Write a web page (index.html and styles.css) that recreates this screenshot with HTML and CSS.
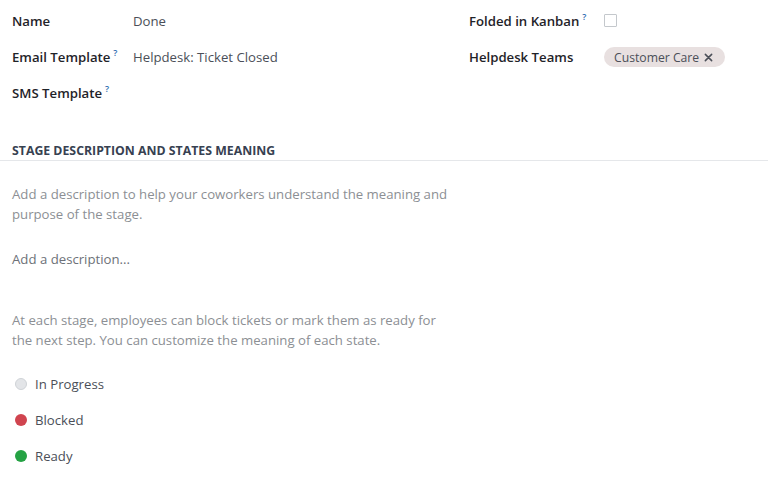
FILE: index.html
```html
<!DOCTYPE html>
<html>
<head>
<meta charset="utf-8">
<link rel="stylesheet" href="styles.css">
</head>
<body>
<div class="form">
  <div class="groups">
    <div class="group left">
      <div class="row">
        <div class="label">Name</div>
        <div class="value">Done</div>
      </div>
      <div class="row">
        <div class="label">Email Template<sup>?</sup></div>
        <div class="value">Helpdesk: Ticket Closed</div>
      </div>
      <div class="row">
        <div class="label">SMS Template<sup>?</sup></div>
        <div class="value"></div>
      </div>
    </div>
    <div class="group right">
      <div class="row">
        <div class="label">Folded in Kanban<sup>?</sup></div>
        <div class="value"><span class="checkbox"></span></div>
      </div>
      <div class="row">
        <div class="label">Helpdesk Teams</div>
        <div class="value"><span class="tag">Customer Care<svg class="x" viewBox="0 0 10 10" width="9" height="9"><path d="M1.5 1.5 L8.5 8.5 M8.5 1.5 L1.5 8.5" stroke="#4b4f58" stroke-width="1.7" stroke-linecap="round" fill="none"/></svg></span></div>
      </div>
    </div>
  </div>

  <div class="separator">STAGE DESCRIPTION AND STATES MEANING</div>

  <div class="section">
    <p class="help">Add a description to help your coworkers understand the meaning and purpose of the stage.</p>
    <p class="placeholder">Add a description...</p>
    <p class="help help2">At each stage, employees can block tickets or mark them as ready for the next step. You can customize the meaning of each state.</p>
    <ul class="states">
      <li><span class="dot grey"></span>In Progress</li>
      <li><span class="dot red"></span>Blocked</li>
      <li><span class="dot green"></span>Ready</li>
    </ul>
  </div>
</div>
</body>
</html>
```

FILE: styles.css
```css
* { box-sizing: border-box; }
html, body { margin: 0; padding: 0; background: #fff; }
body {
  font-family: "Open Sans", "Noto Sans", sans-serif;
  font-size: 13.2px;
  color: #4b4f58;
}
.groups { display: flex; padding: 3px 12px 0; }
.group { display: flex; flex-direction: column; }
.left { width: 457px; }
.right { flex: 1; }
.row { display: flex; align-items: center; height: 36px; }
.label {
  color: #1f2329;
  font-weight: 600;
  width: 121px;
  flex: none;
}
.right .label { width: 135px; }
.label sup {
  font-size: 9px;
  color: #2b6cb0;
  font-weight: 600;
  margin-left: 3px;
  vertical-align: 6px;
  line-height: 0;
}
.value { flex: 1; }
.checkbox {
  display: inline-block;
  width: 13px; height: 13px;
  border: 1px solid #c4c8cc;
  border-radius: 1px;
  vertical-align: middle;
  margin-top: -4px;
}
.tag {
  display: inline-flex;
  align-items: center;
  background: #e8e0e0;
  color: #4b4f58;
  border-radius: 10px;
  height: 20px;
  padding: 0 12px 0 10px;
  font-size: 12.2px;
}
.tag .x { margin-left: 5px; }
.separator {
  margin-top: 31px;
  padding: 0 12px 1px;
  border-bottom: 1px solid #e5e7ea;
  font-size: 12.3px;
  font-weight: 700;
  color: #374151;
}
.section { padding: 0 12px; width: 466px; }
.section p { margin: 0; line-height: 20px; }
.help { color: #8c8f94; margin-top: 23px !important; }
.placeholder { color: #6d7178; margin-top: 25px !important; }
.help2 { margin-top: 41px !important; }
.states { list-style: none; padding: 0; margin: 16px 0 0; }
.states li { display: flex; align-items: center; height: 36px; color: #4b4f58; }
.dot {
  width: 12px; height: 12px; border-radius: 50%;
  margin: 0 8px 0 3px; flex: none;
}
.grey { background: #e3e5e8; border: 1px solid #cfd3d7; }
.red { background: #d0444f; }
.green { background: #25a244; }
```
